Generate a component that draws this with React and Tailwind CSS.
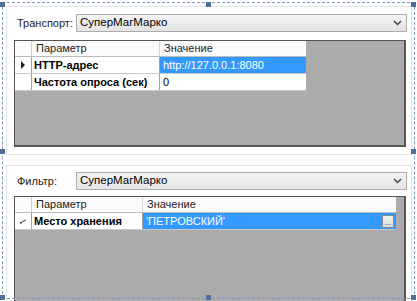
import React from "react";

const font = { fontFamily: '"Liberation Sans", Arial, sans-serif' };

function Chevron() {
  return (
    <svg width="9" height="6" viewBox="0 0 9 6" className="block">
      <path d="M1 1 L4.5 4.5 L8 1" fill="none" stroke="#444" strokeWidth="1.5" />
    </svg>
  );
}

function Combo({ label }) {
  return (
    <div className="flex items-center h-[18px]">
      <div className="w-[69px] shrink-0 whitespace-nowrap pl-[10px] text-[11px] text-[#222] leading-none">{label}</div>
      <div className="flex items-center w-[331px] shrink-0 h-[18px] border border-[#acacac] bg-gradient-to-b from-[#f3f3f3] to-[#e4e4e4] pl-[3px] pr-[4px]">
        <span className="flex-1 text-[11.5px] text-black leading-none">СуперМагМарко</span>
        <Chevron />
      </div>
    </div>
  );
}

function Arrow() {
  return (
    <svg width="5" height="8" viewBox="0 0 5 8" className="block">
      <path d="M0 0 L4 4 L0 8 Z" fill="#222" />
    </svg>
  );
}

function Pencil() {
  return (
    <svg width="8" height="6" viewBox="0 0 8 6" className="block">
      <path d="M1 5 L7 2" stroke="#333" strokeWidth="1" />
      <path d="M1 5 L3 5" stroke="#333" strokeWidth="1" />
    </svg>
  );
}

function Grid({ c1, c2, rows, height }) {
  return (
    <div
      className="ml-[7px] w-[392px] shrink-0 border border-[#555] border-r-[2px] border-b-[2px] bg-[#ababab] overflow-hidden"
      style={{ height }}
    >
      <div className="flex flex-col" style={{ width: c1 + c2 + 17 }}>
        <div className="flex h-[16px] bg-[#fbfbfb] border-b border-[#bcbcbc] text-[11px] text-[#222] leading-none">
          <div className="w-[17px] border-r border-[#d0d0d0]" />
          <div className="flex items-center pl-[4px] border-r border-[#d6d6d6]" style={{ width: c1 }}>
            Параметр
          </div>
          <div className="flex items-center pl-[4px]" style={{ width: c2 }}>
            Значение
          </div>
        </div>
        {rows.map((r, i) => (
          <div key={i} className="flex h-[17px] bg-white border-b border-[#c8c8c8] text-[11px] leading-none">
            <div className="w-[17px] flex items-center justify-center border-r border-[#a0a0a0]">
              {r.mark === "arrow" ? <Arrow /> : r.mark === "pencil" ? <Pencil /> : null}
            </div>
            <div className="flex items-center pl-[2px] font-bold text-black border-r border-[#a0a0a0] whitespace-nowrap" style={{ width: c1 }}>
              {r.name}
            </div>
            <div
              className={
                "flex items-center pl-[3px] pr-[2px] " + (r.sel ? "bg-[#3399ff] text-white" : "text-black")
              }
              style={{ width: c2 }}
            >
              <span className="flex-1">{r.value}</span>
              {r.button ? (
                <div className="w-[12px] h-[13px] border border-[#8a8a8a] bg-gradient-to-b from-[#f4f4f4] to-[#dcdcdc] flex items-end justify-center">
                  <span className="text-[8px] leading-[8px] text-[#333]">...</span>
                </div>
              ) : null}
            </div>
          </div>
        ))}
      </div>
    </div>
  );
}

function Handle({ cls }) {
  return <div className={"absolute w-[5px] h-[5px] bg-[#4f6f99] " + cls} />;
}

export default function App() {
  return (
    <div className="relative w-[417px] h-[301px] bg-white overflow-hidden" style={font}>
      <div className="pt-[6px] pl-[6px] flex flex-col gap-[10px]">
        <div className="w-[406px] h-[149px] shrink-0 border border-[#e2e2e2] pt-[7px] flex flex-col gap-[8px]">
          <Combo label="Транспорт:" />
          <Grid
            c1={128}
            c2={146}
            height={107}
            rows={[
              { mark: "arrow", name: "HTTP-адрес", value: "http://127.0.0.1:8080", sel: true },
              { name: "Частота опроса (сек)", value: "0" },
            ]}
          />
        </div>
        <div className="w-[406px] h-[170px] shrink-0 border border-[#e2e2e2] pt-[6px] flex flex-col gap-[6px]">
          <Combo label="Фильтр:" />
          <Grid
            c1={111}
            c2={253}
            height={140}
            rows={[{ mark: "pencil", name: "Место хранения", value: "'ПЕТРОВСКИЙ'", sel: true, button: true }]}
          />
        </div>
      </div>
      <div className="absolute left-[2px] top-[2px] w-[413px] h-[297px] border border-dashed border-[#7d98bb] pointer-events-none" />
      <Handle cls="left-0 top-[2px]" />
      <Handle cls="left-[206px] top-[2px]" />
      <Handle cls="left-[411px] top-[2px]" />
      <Handle cls="left-0 top-[149px]" />
      <Handle cls="left-[411px] top-[149px]" />
      <Handle cls="left-0 top-[295px]" />
      <Handle cls="left-[206px] top-[295px]" />
      <Handle cls="left-[411px] top-[295px]" />
    </div>
  );
}
